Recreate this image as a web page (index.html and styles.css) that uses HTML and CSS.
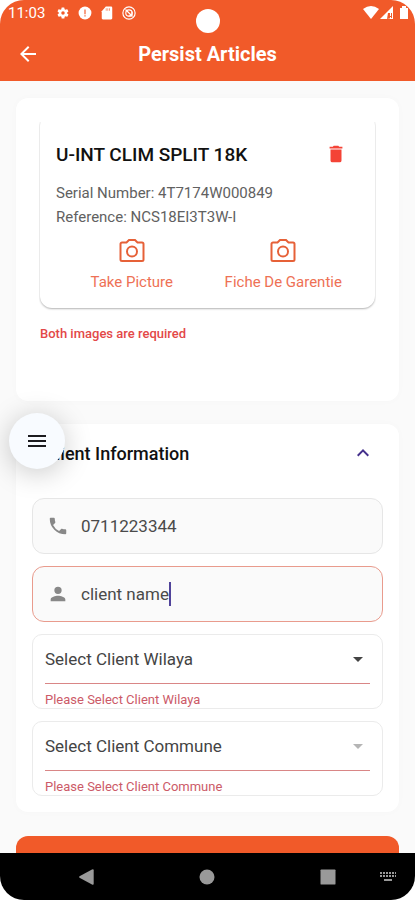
FILE: index.html
```html
<!DOCTYPE html>
<html lang="en">
<head>
<meta charset="utf-8">
<meta name="viewport" content="width=device-width, initial-scale=1">
<title>Persist Articles</title>
<link rel="stylesheet" href="styles.css">
</head>
<body>
<div class="screen">
  <header class="top">
    <div class="status">
      <span class="time">11:03</span>
      <svg class="status-icon" viewBox="0 0 24 24"><path d="M19.1 12.9a7 7 0 0 0 0-1.800l2-1.600a.5.5 0 0 0 .1-.6l-1.900-3.300a.5.5 0 0 0-.6-.2l-2.400 1a7 7 0 0 0-1.600-1l-.4-2.500a.5.5 0 0 0-.5-.4h-3.800a.5.5 0 0 0-.5.400l-.3 2.500a7 7 0 0 0-1.700 1l-2.400-1a.5.5 0 0 0-.6.200L2.700 8.900a.5.5 0 0 0 .1.600l2 1.600a7 7 0 0 0 0 1.800l-2 1.600a.5.5 0 0 0-.1.600l1.900 3.300c.1.200.4.300.6.200l2.400-1a7 7 0 0 0 1.700 1l.3 2.500c0 .2.200.4.500.4h3.800c.3 0 .5-.2.500-.4l.4-2.500a7 7 0 0 0 1.600-1l2.400 1c.2.100.5 0 .6-.2l1.900-3.300a.5.5 0 0 0-.1-.6zM12 15a3 3 0 1 1 0-6 3 3 0 0 1 0 6z"/></svg>
      <svg class="status-icon" viewBox="0 0 24 24"><circle cx="12" cy="12" r="11"/><path class="cut" d="M11 6h2v8h-2zM11 16h2v2h-2z"/></svg>
      <svg class="status-icon" viewBox="0 0 24 24"><path d="M19 1h-9L3 9v12a2 2 0 0 0 2 2h14a2 2 0 0 0 2-2V3a2 2 0 0 0-2-2z"/><path class="cut" d="M10 4h1v4h-1zM13 4h1v4h-1zM16 4h1v4h-1z"/></svg>
      <svg class="status-icon" viewBox="0 0 24 24"><g class="line"><circle cx="12" cy="12" r="10.500"/><circle cx="12" cy="12" r="5.500"/><path d="M6 6l12 12M17 10v7h-6"/></g></svg>
      <span class="camera-hole"></span>
      <svg class="signals" viewBox="0 0 48 16"><path d="M0 4Q8-2 16 4L8 14z"/><path d="M30 1v13H17z"/><path class="cut" d="M24 14l1-6h4v5z"/><path d="M27 7h1v4h-1zM27 12h1v2h-1z"/><path d="M37 3h2V1h4v2h2v11h-8z"/></svg>
    </div>
    <div class="appbar">
      <button class="icon-button" aria-label="Back"><svg viewBox="0 0 24 24"><path d="M20 11H7.800l5.600-5.600L12 4l-8 8 8 8 1.400-1.400L7.800 13H20z"/></svg></button>
      <h1>Persist Articles</h1>
    </div>
  </header>
  <main>
    <section class="panel articles">
      <article class="article">
        <div class="article-head">
          <h2>U-INT CLIM SPLIT 18K</h2>
          <button class="delete" aria-label="Delete article"><svg viewBox="0 0 24 24"><path d="M6 19a2 2 0 0 0 2 2h8a2 2 0 0 0 2-2V7H6zM19 4h-3.500l-1-1h-5l-1 1H5v2h14z"/></svg></button>
        </div>
        <p>Serial Number: 4T7174W000849</p>
        <p>Reference: NCS18EI3T3W-I</p>
        <div class="captures">
          <button class="capture"><svg viewBox="0 0 26 24"><g class="outline"><path d="M3 4.500h4.500L10 2h6l2.500 2.500H23A1.500 1.500 0 0 1 24.500 6v15.500A1.500 1.500 0 0 1 23 23H3a1.500 1.500 0 0 1-1.500-1.500V6A1.500 1.500 0 0 1 3 4.500z"/><circle cx="13" cy="13.500" r="5"/></g></svg>Take Picture</button>
          <button class="capture"><svg viewBox="0 0 26 24"><g class="outline"><path d="M3 4.500h4.500L10 2h6l2.500 2.500H23A1.500 1.500 0 0 1 24.500 6v15.500A1.500 1.500 0 0 1 23 23H3a1.500 1.500 0 0 1-1.500-1.500V6A1.500 1.500 0 0 1 3 4.500z"/><circle cx="13" cy="13.500" r="5"/></g></svg>Fiche De Garentie</button>
        </div>
      </article>
      <p class="error">Both images are required</p>
    </section>
    <section class="panel client">
      <div class="client-head">
        <h2>Client Information</h2>
        <button class="toggle" aria-label="Collapse"><svg viewBox="0 0 24 24"><path d="M12 8l-6 6 1.400 1.400 4.600-4.600 4.600 4.600L18 14z"/></svg></button>
      </div>
      <label class="field">
        <svg viewBox="0 0 24 24"><path d="M6.600 10.800a15 15 0 0 0 6.600 6.600l2.200-2.200c.3-.3.700-.4 1-.2 1.100.4 2.300.6 3.600.6.600 0 1 .4 1 1V20c0 .6-.4 1-1 1A17 17 0 0 1 3 4c0-.6.400-1 1-1h3.500c.6 0 1 .4 1 1 0 1.300.2 2.500.6 3.600.1.300 0 .7-.3 1z"/></svg>
        <input type="tel" value="0711223344" aria-label="Phone number">
      </label>
      <label class="field invalid">
        <svg viewBox="0 0 24 24"><path d="M12 12a4 4 0 1 0 0-8 4 4 0 0 0 0 8zm0 2c-2.700 0-8 1.300-8 4v2h16v-2c0-2.700-5.300-4-8-4z"/></svg>
        <input type="text" value="client name" aria-label="Client name"><span class="caret"></span>
      </label>
      <div class="picker">
        <div class="picker-box">
          <select id="wilaya" aria-label="Client wilaya"><option>Select Client Wilaya</option></select>
          <svg viewBox="0 0 24 24"><path d="M7 10l5 5 5-5z"/></svg>
        </div>
        <label for="wilaya">Please Select Client Wilaya</label>
      </div>
      <div class="picker">
        <div class="picker-box">
          <select id="commune" aria-label="Client commune"><option>Select Client Commune</option></select>
          <svg class="dim" viewBox="0 0 24 24"><path d="M7 10l5 5 5-5z"/></svg>
        </div>
        <label for="commune">Please Select Client Commune</label>
      </div>
    </section>
    <button class="submit" aria-label="Submit"></button>
  </main>
  <nav>
    <button aria-label="Back"><svg viewBox="0 0 24 24"><path d="M20 4v16q0 2-2 1L3 13q-1-1 0-2l15-8q2-1 2 1z"/></svg></button>
    <button aria-label="Home"><svg viewBox="0 0 24 24"><circle cx="12" cy="12" r="9"/></svg></button>
    <button aria-label="Recents"><svg viewBox="0 0 24 24"><rect x="3" y="3" width="18" height="18" rx="1"/></svg></button>
    <button class="keyboard" aria-label="Keyboard"><svg viewBox="0 0 18 12"><path d="M1 1h2v2H1zM4 1h2v2H4zM7 1h2v2H7zM10 1h2v2h-2zM13 1h2v2h-2zM16 1h1v2h-1zM1 4h2v2H1zM4 4h2v2H4zM7 4h2v2H7zM10 4h2v2h-2zM13 4h2v2h-2zM16 4h1v2h-1zM5 8h8v2H5z"/></svg></button>
  </nav>
  <button class="menu" aria-label="Menu"><svg viewBox="0 0 24 24"><path d="M3 6h18v2H3zM3 11h18v2H3zM3 16h18v2H3z"/></svg></button>
</div>
</body>
</html>
```
FILE: styles.css
```css
* { box-sizing: border-box; margin: 0; }
body { background: #fff; font-family: Roboto, sans-serif; color: #222; }
button { border: 0; padding: 0; background: none; font: inherit; color: inherit; }
input, select { font: inherit; color: inherit; border: 0; padding: 0; background: none; outline: 0; min-width: 0; }
svg { display: block; fill: currentColor; flex: none; }

.screen { position: relative; display: flex; flex-direction: column; height: 100vh; overflow: hidden; border-radius: 24px; background: #fafafa; }

.top { flex: none; background: #f15a29; color: #fff; }
.status { position: relative; display: flex; align-items: center; gap: 8px; height: 26px; padding: 0 4px 0 8px; }
.time { font-size: 15px; margin-right: 3px; }
.status-icon { width: 14px; height: 14px; }
.cut { fill: #f15a29; }
.line { fill: none; stroke: currentColor; stroke-width: 2; }
.camera-hole { position: absolute; top: 9px; left: 50%; width: 24px; height: 24px; margin-left: -12px; border-radius: 50%; background: #fff; }
.signals { width: 48px; height: 16px; margin-left: auto; }
.appbar { display: grid; grid-template-columns: 56px 1fr 56px; align-items: center; height: 55px; }
.icon-button { justify-self: center; }
.icon-button svg { width: 24px; height: 24px; }
.appbar h1 { font-size: 20px; font-weight: 700; text-align: center; }

main { flex: 1; min-height: 0; overflow: hidden; display: flex; flex-direction: column; padding: 17px 16px 0; }
.panel { flex: none; background: #fff; border-radius: 12px; box-shadow: 0 0 8px rgba(0, 0, 0, .02); }
.articles { padding: 16px 24px 59px; margin-bottom: 23px; }
.article { padding: 24px 16px 16px; border-radius: 12px; box-shadow: 0 1px 2px rgba(0, 0, 0, .3); clip-path: inset(8px -1px -4px -1px); }
.article-head { display: flex; align-items: center; justify-content: space-between; height: 32px; margin-bottom: 11px; padding-right: 12px; }
h2 { font-size: 18px; font-weight: 500; color: #111; }
.article h2 { font-size: 19px; }
.delete { color: #f44336; }
.delete svg { width: 22px; height: 22px; }
.article p { font-size: 15px; line-height: 24px; color: #616161; }
.captures { display: grid; grid-template-columns: 1fr 1fr; margin-top: 9px; }
.capture { display: flex; flex-direction: column; align-items: center; gap: 10px; font-size: 15px; line-height: 20px; color: #ee7155; }
.capture svg { width: 26px; height: 24px; color: #e66138; }
.outline { fill: none; stroke: currentColor; stroke-width: 2; }
.error { margin-top: 18px; font-size: 13px; line-height: 16px; font-weight: 500; color: #e34848; }

.client { padding: 0 16px 16px; margin-bottom: 24px; }
.client-head { display: flex; align-items: center; justify-content: space-between; height: 58px; padding: 0 8px 0 12px; margin-bottom: 16px; }
.toggle { color: #44308c; }
.toggle svg { width: 24px; height: 24px; }
.field { display: flex; align-items: center; height: 56px; margin-bottom: 12px; padding: 0 14px; border: 1px solid #e6e6e6; border-radius: 12px; background: #fafafa; font-size: 17px; color: #4a4a4a; }
.field svg { width: 22px; height: 22px; margin-right: 12px; color: #888; }
.field input { field-sizing: content; }
.invalid { border-color: #e99b8d; }
.caret { width: 2px; height: 24px; background: #50439a; }
.picker { height: 75px; padding: 0 12px; margin-bottom: 12px; border: 1px solid #ebebeb; border-radius: 10px; font-size: 17px; color: #444; }
.picker:last-child { margin-bottom: 0; }
.picker-box { display: grid; align-items: center; height: 49px; border-bottom: 1px solid #d98686; }
.picker-box > * { grid-area: 1 / 1; }
.picker select { width: 100%; height: 100%; appearance: none; opacity: 1; }
.picker-box svg { width: 24px; height: 24px; justify-self: end; pointer-events: none; }
.picker .dim { color: #b5b5b5; }
.picker label { display: block; padding-top: 8px; font-size: 13px; line-height: 16px; color: #cc5a68; }
.submit { flex: none; height: 48px; border-radius: 12px; background: #f15a29; }

nav { flex: none; display: grid; grid-template-columns: 27px 1fr 1fr 1fr 27px; align-items: center; height: 47px; background: #000; color: #999; }
nav button { justify-self: center; }
nav button:first-child { grid-column: 2; }
nav svg { width: 20px; height: 20px; }
nav .keyboard { justify-self: start; margin-left: -9px; }
nav .keyboard svg { width: 18px; height: 12px; }

.menu { position: absolute; top: 413px; left: 9px; display: grid; place-items: center; width: 56px; height: 56px; border-radius: 50%; background: #f8fbff; color: #1c1b1f; box-shadow: 0 4px 28px rgba(0, 0, 0, .22); }
.menu svg { width: 24px; height: 24px; }
```
